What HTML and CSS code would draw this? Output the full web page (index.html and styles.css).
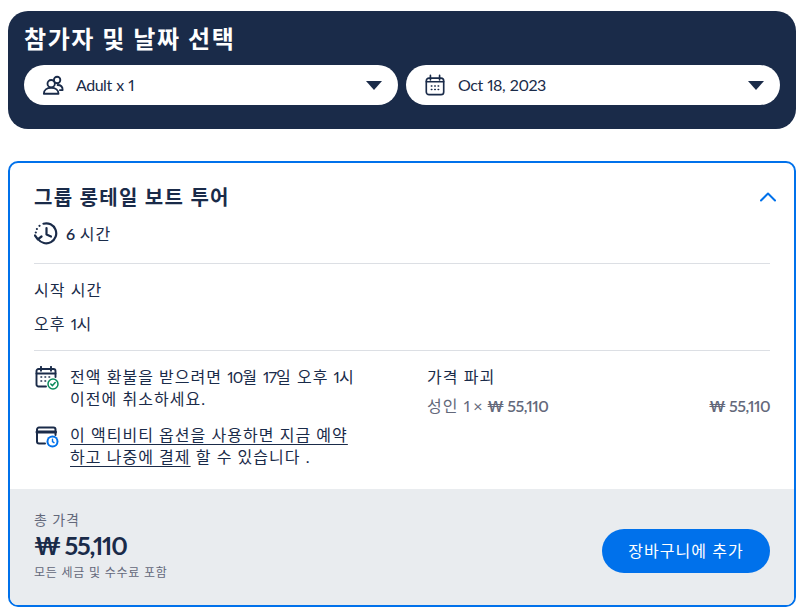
FILE: index.html
```html
<!DOCTYPE html>
<html lang="ko">
<head>
  <title>참가자 및 날짜 선택</title>
  <link rel="stylesheet" href="styles.css">
</head>
<body>

<!-- Participants and date -->
<section class="picker">
  <h1>참가자 및 날짜 선택</h1>
  <div class="picker-row">
    <div class="pill">
      <svg class="pill-icon" viewBox="0 0 24 24" fill="none" stroke="#1a2b49" stroke-width="2" stroke-linejoin="round" stroke-linecap="round">
        <circle cx="10" cy="10.500" r="4"/>
        <circle cx="16.500" cy="6.500" r="3.500"/>
        <path d="M2 21.500c0-4 3.200-6.500 8-6.500s8 2.500 8 6.500z"/>
        <path d="M17 12c3.200 0 5.500 2 5.500 5.500h-3"/>
      </svg>
      <span class="pill-text en">Adult x 1</span>
      <span class="caret"></span>
    </div>
    <div class="pill">
      <svg class="pill-icon" viewBox="0 0 24 24" fill="none" stroke="#1a2b49" stroke-width="1.800" stroke-linecap="round">
        <rect x="2.500" y="4.500" width="19" height="18" rx="3"/>
        <path d="M7 1.500v5M17 1.500v5M2.500 8.500h19"/>
        <path d="M8 13h.6M11.700 13h.6M15.400 13h.6M8 17h.6M11.700 17h.6M15.400 17h.6" stroke-width="1.600"/>
      </svg>
      <span class="pill-text en">Oct 18, 2023</span>
      <span class="caret"></span>
    </div>
  </div>
</section>

<!-- Option card -->
<section class="card">
  <div class="card-body">
    <div class="card-head">
      <h2>그룹 롱테일 보트 투어</h2>
      <svg class="chevron" viewBox="0 0 18 10" fill="none" stroke="#0071eb" stroke-width="2" stroke-linecap="round" stroke-linejoin="round">
        <path d="M2 8.500l7-7 7 7"/>
      </svg>
    </div>
    <div class="duration">
      <svg class="icon" viewBox="0 0 24 24" fill="none" stroke="#1a2b49" stroke-width="2.200" stroke-linecap="round" stroke-linejoin="round">
        <path d="M9.500 2.700A10 10 0 1 1 4 18"/>
        <path d="M12.500 7v6.500l4.500 2"/>
        <path d="M1 14.500l2.800 3.800 3.700-2.800"/>
        <path d="M5.500 4.800h.01M2.900 8h.01M1.800 11.500h.01"/>
      </svg>
      <span><span class="en num">6</span> 시간</span>
    </div>

    <div class="times">
      <div>시작 시간</div>
      <div class="times-value">오후 <span class="en">1</span>시</div>
    </div>

    <div class="details">
      <div class="notes">
        <div class="note">
          <svg class="icon" viewBox="0 0 24 24" fill="none" stroke="#1a2b49" stroke-width="1.900" stroke-linecap="round">
            <path d="M11 20.500H3.500a2 2 0 0 1-2-2V5a2 2 0 0 1 2-2h15a2 2 0 0 1 2 2v6"/>
            <path d="M6 .8v4M16 .8v4M1.500 7.500h19"/>
            <path d="M6 11h.6M10 11h.6M14 11h.6M6 15h.6M10 15h.6" stroke-width="1.600"/>
            <circle cx="18" cy="18" r="5" stroke="#0a8a5c" stroke-width="1.500" fill="#fff"/>
            <path d="M15.800 18l1.600 1.600 2.800-3" stroke="#0a8a5c" stroke-width="1.500"/>
          </svg>
          <p>전액 환불을 받으려면 <span class="en">10</span>월 <span class="en">17</span>일 오후 <span class="nowrap"><span class="en">1</span>시</span> 이전에 취소하세요.</p>
        </div>
        <div class="note">
          <svg class="icon" viewBox="0 0 24 24" fill="none" stroke="#1a2b49" stroke-width="2" stroke-linecap="round">
            <path d="M10 19.500H4a2 2 0 0 1-2-2V5.500a2 2 0 0 1 2-2h14.500a2 2 0 0 1 2 2V11"/>
            <path d="M2 8h18.500" stroke-width="3"/>
            <circle cx="17.500" cy="17.500" r="6" fill="#0071eb" stroke="none"/>
            <circle cx="17.500" cy="17.500" r="4" fill="#fff" stroke="none"/>
            <path d="M17.500 15.200v2.500l1.500 1" stroke="#0071eb" stroke-width="1.400"/>
          </svg>
          <p><u>이 액티비티 옵션을 사용하면 지금 예약하고 나중에 결제</u> 할 수 있습니다 .</p>
        </div>
      </div>
      <div class="breakdown">
        <div>가격 파괴</div>
        <div class="breakdown-row">
          <span>성인 <span class="en">1 ×</span> <b class="en">₩ 55,110</b></span>
          <b class="en">₩ 55,110</b>
        </div>
      </div>
    </div>
  </div>

  <div class="card-foot">
    <div>
      <div class="total-label">총 가격</div>
      <div class="total-price en">₩ 55,110</div>
      <div class="total-note">모든 세금 및 수수료 포함</div>
    </div>
    <button class="add-btn">장바구니에 추가</button>
  </div>
</section>

</body>
</html>
```

FILE: styles.css
```css
body {
  font-family: 'Lato', 'Noto Sans CJK KR', sans-serif;
  font-variant-numeric: proportional-nums;
  margin: 0;
  padding: 11px 14px 9px 8px;
  background: #fff;
  color: #1a2b49;
}

/* the hangul in the shot is wider than the installed font's */
body * {
  letter-spacing: .065em;
}

.en {
  letter-spacing: -.03em;
}

.num {
  font-weight: 600;
}

.nowrap {
  white-space: nowrap;
}

h1, h2, p {
  margin: 0;
}

.picker {
  background: #1a2b49;
  border-radius: 20px;
  padding: 13px 16px 24px;
  height: 81px;
}

.picker h1 {
  color: #fff;
  font-size: 24px;
  font-weight: 700;
  line-height: 30px;
  height: 41px;
}

.picker-row {
  display: flex;
  gap: 8px;
}

.pill {
  flex: 1;
  height: 40px;
  background: #fff;
  border-radius: 20px;
  display: flex;
  align-items: center;
  padding: 0 18px;
}

.pill-icon {
  width: 22px;
  height: 22px;
  margin-right: 12px;
}

.pill-text {
  flex: 1;
  font-size: 16px;
  padding-bottom: 2px;
  word-spacing: 1px;
}

.caret {
  width: 0;
  height: 0;
  border-left: 8px solid transparent;
  border-right: 8px solid transparent;
  border-top: 9px solid #1a2b49;
  margin-right: -2px;
}

.card {
  margin-top: 32px;
  height: 442px;
  border: 2px solid #0071eb;
  border-radius: 10px;
  overflow: hidden;
  display: flex;
  flex-direction: column;
}

.card-body {
  flex: 1;
  padding: 0 24px;
}

.card-head {
  display: flex;
  justify-content: space-between;
  align-items: center;
  padding-top: 19px;
  height: 30px;
}

.card-head h2 {
  font-size: 20px;
  font-weight: 700;
  line-height: 30px;
}

.chevron {
  width: 18px;
  height: 10px;
  margin-right: -7px;
}

.duration {
  display: flex;
  align-items: center;
  gap: 8px;
  margin-top: 8px;
  height: 26px;
  padding-bottom: 17px;
  border-bottom: 1px solid #dcdfe4;
  font-size: 16px;
}

.icon {
  width: 24px;
  height: 24px;
  flex-shrink: 0;
}

.times {
  padding: 14px 0;
  border-bottom: 1px solid #dcdfe4;
  font-size: 16px;
  line-height: 24px;
}

.times-value {
  margin-top: 10px;
}

.details {
  display: flex;
  gap: 53px;
  padding-top: 15px;
  font-size: 16px;
  line-height: 22px;
}

.notes {
  width: 340px;
  flex-shrink: 0;
  display: flex;
  flex-direction: column;
  gap: 14px;
}

.note {
  display: flex;
  gap: 11px;
}

.note .icon {
  margin-left: 1px;
}

.note p {
  width: 289px;
}

.note .en {
  letter-spacing: -.06em;
}

.note u {
  text-underline-offset: 3px;
}

.breakdown {
  flex: 1;
}

.breakdown-row {
  display: flex;
  justify-content: space-between;
  margin-top: 7px;
  color: #63687a;
}

.breakdown-row b {
  font-weight: 600;
}

.card-foot {
  background: #e9ecef;
  height: 116px;
  padding: 0 24px;
  display: flex;
  justify-content: space-between;
  align-items: center;
}

.total-label {
  font-size: 14px;
  line-height: 19px;
  color: #63687a;
}

.total-price {
  font-size: 25px;
  font-weight: 700;
  line-height: 32px;
  letter-spacing: -.05em;
}

.total-note {
  font-size: 12px;
  line-height: 23px;
  color: #63687a;
}

.add-btn {
  width: 168px;
  height: 44px;
  margin-top: 8px;
  padding: 0 0 2px;
  border: none;
  border-radius: 22px;
  background: #0071eb;
  color: #fff;
  font-family: inherit;
  font-size: 16px;
  cursor: pointer;
}
```
